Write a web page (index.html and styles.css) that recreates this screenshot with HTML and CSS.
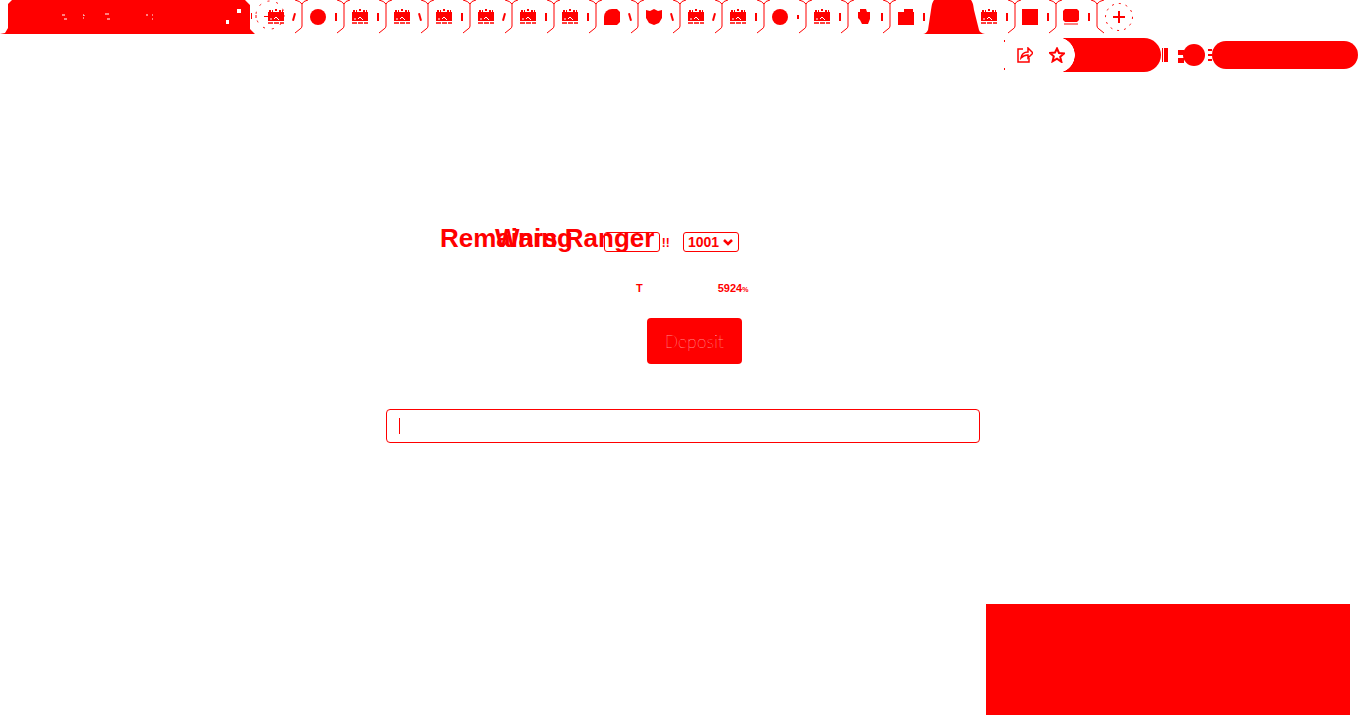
FILE: index.html
```html
<!DOCTYPE html>
<html lang="en">
<head>
	<title>Term Wars</title>
	<link rel="stylesheet" href="styles.css">
</head>
<body>

<svg class="defs" width="0" height="0">
	<symbol id="i-mail" viewBox="0 0 16 16">
		<path d="M1 2h4M7 1h2M11 2h4" stroke="#f00" stroke-width="2" stroke-dasharray="2 1" fill="none"/>
		<path d="M0 3h16v9H0z" fill="#f00"/>
		<path d="M6 10l2-2 3 3M2 10h2" stroke="#fff" fill="none"/>
		<path d="M0 14h16" stroke="#f00" stroke-width="1.500" stroke-dasharray="5 1" fill="none"/>
	</symbol>
	<symbol id="i-round" viewBox="0 0 16 16"><circle cx="8" cy="8" r="8" fill="#f00"/></symbol>
	<symbol id="i-blob" viewBox="0 0 16 16"><path d="M8 0h5l3 3v10l-3 3H0V8a8 8 0 0 1 8-8z" fill="#f00"/></symbol>
	<symbol id="i-shield" viewBox="0 0 16 16"><path d="M0 1l4 1 4-2 4 2 4-1v8l-3 5-5 2-5-2-3-5z" fill="#f00"/></symbol>
	<symbol id="i-hand" viewBox="0 0 16 16"><path d="M4 0h6l1 3h3v7l-2 5H6L4 11 2 9V3h2z" fill="#f00"/></symbol>
	<symbol id="i-box" viewBox="0 0 16 16"><path d="M6 0h9v3h1v13H0V3h6z" fill="#f00"/></symbol>
	<symbol id="i-square" viewBox="0 0 16 16"><path d="M0 0h16v16H0z" fill="#f00"/></symbol>
	<symbol id="i-screen" viewBox="0 0 16 16">
		<path d="M2 0h12l2 2v9l-2 2H2l-2-2V2z" fill="#f00"/>
		<path d="M1 15h14" stroke="#f00" fill="none"/>
	</symbol>
	<symbol id="i-sep" viewBox="0 0 14 34">
		<path d="M0 0q5 1 7 4 1-3 6-4M7 4v22q0 2-2 3l-5 4" stroke="#f00" fill="none"/>
	</symbol>
</svg>

<header class="tabstrip">
	<div class="tab-first">
		<svg class="tab-first-bg" width="290" height="34">
			<path d="M0 34l5-1 3-5V4l4-4h233l5 5v24l5 5z" fill="#f00"/>
			<path d="M62 15h3M83 15h1v1M105 14h4M146 15h2M152 15h1M64 19h3M107 19h3M83 18h1M152 19h1" stroke="#fff"/>
			<path d="M237 9h4v4h-4zM226 20h3v4h-3z" fill="#fff"/>
			<circle cx="270" cy="15" r="14" fill="none" stroke="#f00" stroke-dasharray="2 7"/>
			<path d="M264 16.500h4M251.500 13v6M256 15v3" stroke="#f00"/>
		</svg>
	</div>
	<div class="tab"><svg class="tab-icon"><use href="#i-mail"/></svg><span class="close lean-r"></span><svg class="tab-sep"><use href="#i-sep"/></svg></div>
	<div class="tab"><svg class="tab-icon"><use href="#i-round"/></svg><span class="close"></span><svg class="tab-sep"><use href="#i-sep"/></svg></div>
	<div class="tab"><svg class="tab-icon"><use href="#i-mail"/></svg><span class="close"></span><svg class="tab-sep"><use href="#i-sep"/></svg></div>
	<div class="tab"><svg class="tab-icon"><use href="#i-mail"/></svg><span class="close lean-l"></span><svg class="tab-sep"><use href="#i-sep"/></svg></div>
	<div class="tab"><svg class="tab-icon"><use href="#i-mail"/></svg><span class="close"></span><svg class="tab-sep"><use href="#i-sep"/></svg></div>
	<div class="tab"><svg class="tab-icon"><use href="#i-mail"/></svg><span class="close lean-r"></span><svg class="tab-sep"><use href="#i-sep"/></svg></div>
	<div class="tab"><svg class="tab-icon"><use href="#i-mail"/></svg><span class="close"></span><svg class="tab-sep"><use href="#i-sep"/></svg></div>
	<div class="tab"><svg class="tab-icon"><use href="#i-mail"/></svg><span class="close"></span><svg class="tab-sep"><use href="#i-sep"/></svg></div>
	<div class="tab"><svg class="tab-icon"><use href="#i-blob"/></svg><span class="close lean-l"></span><svg class="tab-sep"><use href="#i-sep"/></svg></div>
	<div class="tab"><svg class="tab-icon"><use href="#i-shield"/></svg><span class="close lean-l"></span><svg class="tab-sep"><use href="#i-sep"/></svg></div>
	<div class="tab"><svg class="tab-icon"><use href="#i-mail"/></svg><span class="close lean-r"></span><svg class="tab-sep"><use href="#i-sep"/></svg></div>
	<div class="tab"><svg class="tab-icon"><use href="#i-mail"/></svg><span class="close"></span><svg class="tab-sep"><use href="#i-sep"/></svg></div>
	<div class="tab"><svg class="tab-icon"><use href="#i-round"/></svg><span class="close short"></span><svg class="tab-sep"><use href="#i-sep"/></svg></div>
	<div class="tab"><svg class="tab-icon"><use href="#i-mail"/></svg><span class="close"></span><svg class="tab-sep"><use href="#i-sep"/></svg></div>
	<div class="tab"><svg class="tab-icon"><use href="#i-hand"/></svg><span class="close"></span><svg class="tab-sep"><use href="#i-sep"/></svg></div>
	<div class="tab"><svg class="tab-icon"><use href="#i-box"/></svg><span class="close"></span></div>
	<div class="tab tab-active">
		<svg class="tab-active-bg" width="62" height="34"><path d="M0 34q3 0 5-4l3-20q1-8 3-10h37q2 2 3 10l5 20q1 3 6 4z" fill="#f00"/></svg>
	</div>
	<div class="tab tab-tight"><svg class="tab-icon"><use href="#i-mail"/></svg><span class="close"></span><svg class="tab-sep"><use href="#i-sep"/></svg></div>
	<div class="tab tab-tight"><svg class="tab-icon"><use href="#i-square"/></svg><span class="close"></span><svg class="tab-sep"><use href="#i-sep"/></svg></div>
	<div class="tab tab-tight"><svg class="tab-icon"><use href="#i-screen"/></svg><span class="close"></span><svg class="tab-sep tab-sep-last"><use href="#i-sep"/></svg></div>
	<button class="newtab">
		<svg width="28" height="28"><circle cx="14" cy="14" r="13.500" fill="none" stroke="#f00" stroke-dasharray="2 5"/><path d="M14 8v12M8 14h12" stroke="#f00" stroke-width="2"/></svg>
	</button>
</header>

<div class="toolbar">
	<svg class="omni-end" width="1" height="30"><path d="M.5 0v2M.5 28v2" stroke="#f00"/></svg>
	<svg class="tool-icon" width="16" height="16" viewBox="0 0 16 16"><path d="M6 2H1v13h11v-4" fill="none" stroke="#f00" stroke-width="1.500"/><path d="M4 11q1-6 7-6V1l5 5-5 5V8q-4 0-7 3z" fill="none" stroke="#f00" stroke-width="1.500"/></svg>
	<svg class="tool-icon star" width="16" height="16" viewBox="0 0 16 16"><path d="M8 1.500l2 4.500 5 .5-3.800 3.300 1.200 5L8 11.700 3.600 14.300l1.200-5L1 6l5-.5z" fill="none" stroke="#f00" stroke-width="2"/></svg>
	<div class="omni-pill"></div>
	<div class="omni-tail"></div>
	<svg class="puzzle" width="28" height="24" viewBox="0 0 28 24"><circle cx="17" cy="12" r="11" fill="#f00"/><path d="M1 7h6v5H1zM1 15h6v5H1z" fill="#f00"/></svg>
	<div class="bars"><i></i><i></i><i></i></div>
	<div class="profile"></div>
</div>

<main class="panel">
	<div class="title-row">
		<span class="title-a">Remaining</span>
		<span class="title-b">Wars Ranger <small>!!</small></span>
		<div class="pickers">
			<span class="pick"></span>
			<span class="pick">1001 <svg width="10" height="7" viewBox="0 0 10 7"><path d="M1 1l4 4 4-4" fill="none" stroke="#f00" stroke-width="2.500"/></svg></span>
		</div>
	</div>
	<div class="stats">
		<span class="stat-icon">T</span>
		<span class="stat-num">5924<small>%</small></span>
	</div>
	<button class="deposit">Deposit</button>
	<input class="amount" type="text">
</main>

<div class="promo"></div>

</body>
</html>
```

FILE: styles.css
```css
html, body {
	margin: 0;
	height: 100%;
}

body {
	position: relative;
	font-family: "Liberation Sans", Arial, sans-serif;
	background: white;
	color: #f00;
	overflow: hidden;
}

.defs {
	position: absolute;
}

/* tab strip */
.tabstrip {
	display: flex;
	height: 34px;
}

.tab-first {
	width: 260px;
	flex: none;
}

.tab-first-bg {
	display: block;
	overflow: visible;
}

.tab {
	position: relative;
	display: flex;
	align-items: flex-start;
	width: 42px;
	height: 34px;
	flex: none;
}

.tab-tight {
	width: 41px;
}

.tab-active {
	width: 41px;
}

.tab-active-bg {
	position: absolute;
	left: -9px;
	top: 0;
}

.tab-icon {
	width: 16px;
	height: 16px;
	margin: 9px 0 0 8px;
	flex: none;
}

.close {
	width: 2px;
	height: 8px;
	margin: 13px 0 0 9px;
	background: #f00;
	flex: none;
}

.close.lean-r {
	transform: rotate(15deg);
}

.close.lean-l {
	transform: rotate(-15deg);
}

.close.short {
	height: 4px;
	margin-top: 15px;
}

.tab-sep {
	width: 14px;
	height: 34px;
	margin-left: auto;
	margin-right: -7px;
	flex: none;
}

.tab-sep-last {
	transform: scaleX(-1);
}

.newtab {
	width: 28px;
	height: 28px;
	margin: 3px 0 0 9px;
	padding: 0;
	border: 0;
	background: none;
	flex: none;
}

.newtab svg {
	display: block;
}

/* toolbar */
.toolbar {
	display: flex;
	align-items: center;
	justify-content: flex-end;
	height: 34px;
	margin-top: 4px;
	padding-right: 8px;
}

.omni-end {
	margin-right: 12px;
	flex: none;
}

.tool-icon {
	flex: none;
}

.tool-icon.star {
	position: relative;
	z-index: 1;
	margin-left: 16px;
}

.omni-pill {
	width: 104px;
	height: 34px;
	margin-left: -8px;
	background: radial-gradient(circle at 0 50%, white 17.500px, #f00 18px);
	border-radius: 0 17px 17px 0;
	flex: none;
}

.omni-tail {
	width: 6px;
	height: 14px;
	margin-left: 1px;
	background: linear-gradient(90deg, #f00 1px, white 1px, white 2px, #f00 2px);
	flex: none;
}

.puzzle {
	margin-left: 9px;
	flex: none;
}

.bars {
	display: flex;
	flex-direction: column;
	gap: 3px;
	width: 4px;
	margin-left: 3px;
	flex: none;
}

.bars i {
	display: block;
	height: 2px;
	background: #f00;
}

.profile {
	width: 146px;
	height: 28px;
	background: #f00;
	border-radius: 14px;
	flex: none;
}

/* centre column */
.panel {
	display: flex;
	flex-direction: column;
	width: 594px;
	margin: 157px auto 0;
}

.title-row {
	display: grid;
	height: 24px;
	padding-left: 54px;
	padding-right: 241px;
}

.title-a,
.title-b,
.pickers {
	grid-area: 1 / 1;
	white-space: nowrap;
}

.title-a,
.title-b {
	margin-top: -3px;
	font-size: 26px;
	font-weight: bold;
	line-height: 24px;
}

.title-b {
	padding-left: 55px;
}

.title-b small {
	font-size: 12px;
}

.pickers {
	display: flex;
	justify-content: flex-end;
	align-items: center;
	gap: 23px;
}

.pick {
	display: flex;
	align-items: center;
	gap: 4px;
	box-sizing: border-box;
	width: 56px;
	height: 20px;
	padding-left: 4px;
	border: 1px solid #f00;
	border-radius: 3px;
	font-size: 14px;
	font-weight: bold;
}

.stats {
	display: flex;
	align-items: center;
	gap: 75px;
	height: 14px;
	margin-top: 28px;
	padding-left: 250px;
	font-size: 11px;
	font-weight: bold;
}

.stat-num small {
	font-size: 7px;
}

.deposit {
	width: 95px;
	height: 46px;
	margin: 23px 0 0 261px;
	padding: 0;
	border: 0;
	border-radius: 4px;
	background: #f00;
	color: white;
	font-family: Lato, sans-serif;
	font-size: 17px;
	font-weight: 100;
	letter-spacing: .4px;
}

.amount {
	box-sizing: border-box;
	width: 594px;
	height: 34px;
	margin-top: 45px;
	padding: 0 12px;
	border: 1px solid #f00;
	border-radius: 4px;
	background: linear-gradient(#f00, #f00) no-repeat 12px 8px / 1px 16px;
}

/* bottom right block, floats over the page */
.promo {
	position: absolute;
	right: 16px;
	bottom: 13px;
	width: 364px;
	height: 111px;
	background: #f00;
}
```
